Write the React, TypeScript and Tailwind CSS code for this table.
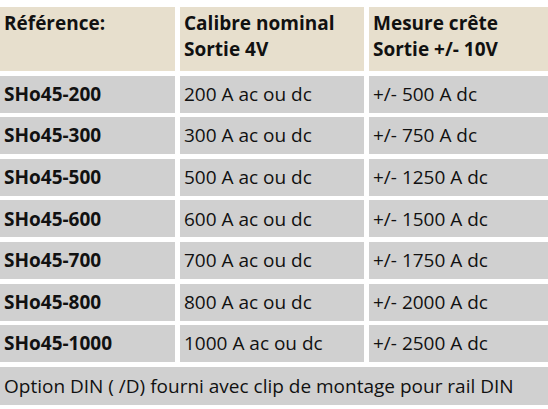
const rows = [
  ["SHo45-200", "200 A ac ou dc", "+/- 500 A dc"],
  ["SHo45-300", "300 A ac ou dc", "+/- 750 A dc"],
  ["SHo45-500", "500 A ac ou dc", "+/- 1250 A dc"],
  ["SHo45-600", "600 A ac ou dc", "+/- 1500 A dc"],
  ["SHo45-700", "700 A ac ou dc", "+/- 1750 A dc"],
  ["SHo45-800", "800 A ac ou dc", "+/- 2000 A dc"],
  ["SHo45-1000", "1000 A ac ou dc", "+/- 2500 A dc"],
];

export default function App() {
  return (
    <div
      className="w-[548px] h-[409px] bg-white pt-[7px] text-[19px] text-[#111]"
      style={{ fontFamily: "'Open Sans', 'Liberation Sans', sans-serif" }}
    >
      <div className="grid grid-cols-[175px_184px_1fr] gap-x-[5px] gap-y-[4.6px]">
        <div className="h-[64px] bg-[#e7dfcd] px-[4px] pt-[3px] font-bold leading-[26px]">
          Référence:
        </div>
        <div className="h-[64px] bg-[#e7dfcd] px-[4px] pt-[3px] font-bold leading-[26px]">
          Calibre nominal
          <br />
          Sortie 4V
        </div>
        <div className="h-[64px] bg-[#e7dfcd] px-[4px] pt-[3px] font-bold leading-[26px]">
          Mesure crête
          <br />
          Sortie +/- 10V
        </div>

        {rows.map((r) => (
          <>
            <div key={r[0]} className="h-[37px] bg-[#d0d0d0] px-[4px] flex items-center font-bold">
              {r[0]}
            </div>
            <div className="h-[37px] bg-[#d0d0d0] px-[4px] flex items-center">{r[1]}</div>
            <div className="h-[37px] bg-[#d0d0d0] px-[4px] flex items-center">{r[2]}</div>
          </>
        ))}

        <div className="col-span-3 h-[38px] bg-[#d0d0d0] px-[4px] flex items-center">
          Option DIN ( /D) fourni avec clip de montage pour rail DIN
        </div>
      </div>
    </div>
  );
}
